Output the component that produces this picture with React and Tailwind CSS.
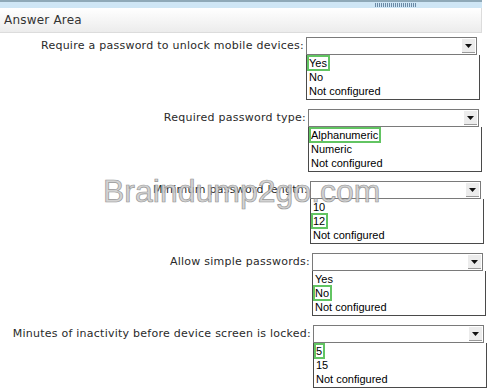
const rows = [
  { label: 'Require a password to unlock mobile devices:', col: 'w-[306px]', options: ['Yes', 'No', 'Not configured'], pick: 0 },
  { label: 'Required password type:', col: 'w-[308px]', options: ['Alphanumeric', 'Numeric', 'Not configured'], pick: 0 },
  { label: 'Minimum password length:', col: 'w-[310px]', options: ['10', '12', 'Not configured'], pick: 1 },
  { label: 'Allow simple passwords:', col: 'w-[312px]', options: ['Yes', 'No', 'Not configured'], pick: 1 },
  { label: 'Minutes of inactivity before device screen is locked:', col: 'w-[313px]', options: ['5', '15', 'Not configured'], pick: 0 },
];

function Dropdown({ options, pick }) {
  return (
    <div className="flex flex-col">
      <div className="flex h-[18px] w-[171px] items-center justify-end border border-[#7a7a7a] bg-white pr-[1px]">
        <div className="flex h-[14px] w-[13px] items-center justify-center border-b border-[#9a9a9a] bg-[#ececec]">
          <svg width="7" height="4" viewBox="0 0 7 4">
            <path d="M0 0h7L3.5 4z" fill="#111" />
          </svg>
        </div>
      </div>
      <ul className="h-[45px] w-[174px] border border-t-0 border-[#4a4a4a] bg-white pt-[1px] text-[11px] leading-[14px] text-black [font-family:'Liberation_Sans',Arial,sans-serif]">
        {options.map((opt, i) => (
          <li key={opt} className="pl-[2px]">
            <span className="relative">
              {opt}
              {i === pick && (
                <span className="absolute -top-[2px] -bottom-[2px] -left-[2px] -right-[3px] border-2 border-[#62c462]" />
              )}
            </span>
          </li>
        ))}
      </ul>
    </div>
  );
}

export default function App() {
  return (
    <div className="relative h-[390px] w-[489px] overflow-hidden bg-white [font-family:'DejaVu_Sans',Verdana,sans-serif]">
      <div className="h-[8px] w-[482px] border-t-2 border-[#8fa9b8] bg-[#cfe6f5] pt-[1px]">
        <div className="ml-[375px] h-[4px] w-[41px] bg-[repeating-linear-gradient(90deg,#6b8aa6_0_1px,transparent_1px_2px)]" />
      </div>
      <div className="flex h-[25px] w-[482px] items-center border-r border-b border-[#dcdcdc] bg-gradient-to-b from-white to-[#ececec] pl-[4px] text-[12px] tracking-[0.2px] text-[#333]">
        Answer Area
      </div>

      <div className="flex flex-col gap-[9px] pt-[4px]">
        {rows.map((r) => (
          <div key={r.label} className="flex items-start">
            <div className={`${r.col} shrink-0 pr-[2px] text-right text-[11px] leading-[18px] tracking-[0.25px] text-[#2a2a2a]`}>{r.label}</div>
            <Dropdown options={r.options} pick={r.pick} />
          </div>
        ))}
      </div>

      <div className="pointer-events-none absolute left-[103px] top-[175px] text-[32px] leading-none text-[#cfcfcf] opacity-90 [-webkit-text-stroke:0.7px_#8c8c8c] [font-family:'Liberation_Sans',Arial,sans-serif]">
        Braindump2go.com
      </div>
    </div>
  );
}
